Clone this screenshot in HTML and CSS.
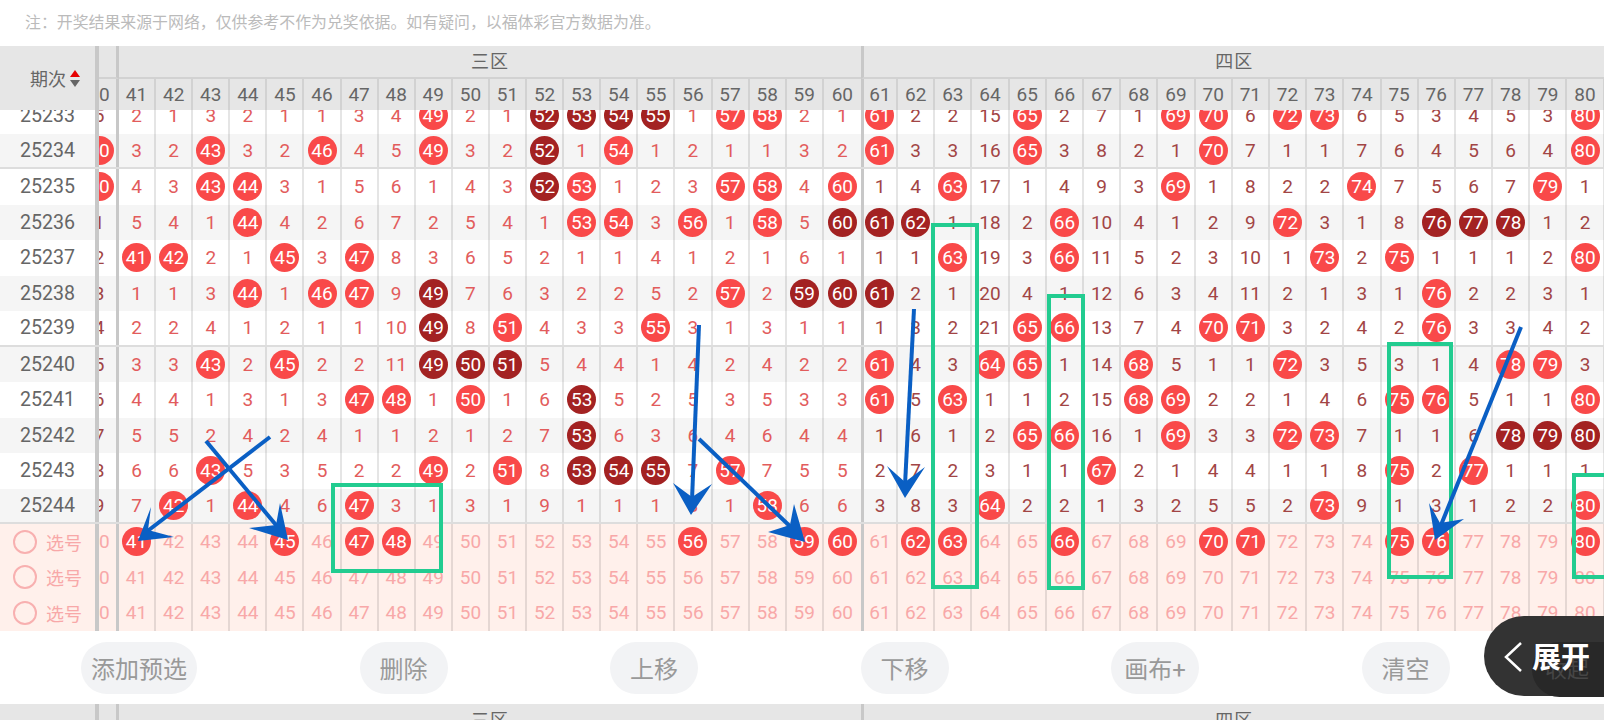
FILE: index.html
```html
<!DOCTYPE html>
<html lang="zh">

<head>
    <meta charset="utf-8">
    <meta name="viewport" content="width=device-width, initial-scale=1.0">
    <title>开奖走势</title>
    <link rel="stylesheet" href="styles.css">
</head>

<body>
    <p class="note">注：开奖结果来源于网络，仅供参考不作为兑奖依据。如有疑问，以福体彩官方数据为准。</p>

    <section class="board">
        <div class="head" id="head">
            <div class="head-period">
                <span>期次</span>
                <span class="sort"><i class="up"></i><i class="down"></i></span>
            </div>
            <div class="head-clip"></div>
            <div class="zone">三区</div>
            <div class="zone zone-four">四区</div>
        </div>
        <div id="rows"></div>
    </section>

    <div class="toolbar">
        <button class="tool">添加预选</button>
        <button class="tool">删除</button>
        <button class="tool">上移</button>
        <button class="tool">下移</button>
        <button class="tool">画布+</button>
        <button class="tool">清空</button>
    </div>

    <div class="head peek">
        <div class="head-period"></div>
        <div class="head-clip"></div>
        <div class="zone">三区</div>
        <div class="zone zone-four">四区</div>
    </div>

    <div class="fold">
        <div class="fold-under">收起</div>
        <svg class="chevron" width="19" height="32" viewBox="0 0 19 32">
            <polyline points="17,2 2,16 17,30" />
        </svg>
        <span class="fold-text">展开</span>
    </div>

    <svg class="marks" width="1604" height="720" viewBox="0 0 1604 720">
        <g class="boxes">
            <rect x="333" y="485" width="108" height="86" />
            <rect x="933" y="225" width="44" height="362" />
            <rect x="1049" y="296" width="34" height="292" />
            <rect x="1389" y="344" width="62" height="233" />
            <rect x="1574" y="475" width="40" height="102" />
        </g>
        <g class="arrows">
            <line x1="270" y1="437" x2="145" y2="533" />
            <polygon points="138,541 151,507 148,530 174,537" />
            <line x1="206" y1="441" x2="281" y2="531" />
            <polygon points="288,540 280,503 276,525 249,528" />
            <line x1="699" y1="325" x2="692" y2="500" />
            <polygon points="691,515 673,483 692,497 712,484" />
            <line x1="914" y1="309" x2="905" y2="485" />
            <polygon points="905,498 887,466 905,482 925,467" />
            <line x1="699" y1="439" x2="797" y2="533" />
            <polygon points="805,542 794,504 790,525 768,532" />
            <line x1="1521" y1="327" x2="1441" y2="525" />
            <polygon points="1435,540 1429,503 1440,523 1464,519" />
        </g>
    </svg>

    <script src="script.js"></script>
</body>

</html>
```

FILE: styles.css
```css
* {
    box-sizing: border-box;
}

body {
    margin: 0;
    width: 1604px;
    height: 720px;
    overflow: hidden;
    position: relative;
    background-color: white;
    font-family: Roboto, "Noto Sans CJK SC", sans-serif;
}

.note {
    margin: 0;
    height: 46px;
    padding-left: 25px;
    line-height: 46px;
    font-size: 15.9px;
    color: #bbbbbb;
}

/* header, same columns as the rows */
.head {
    display: grid;
    grid-template-columns: 99px 20px repeat(20, 37.1px) repeat(20, 37.2px);
    grid-template-rows: 33px 31px;
    height: 64px;
    position: relative;
    z-index: 2;
    background-color: #e6e6e6;
    color: #666666;
}

.head-period {
    grid-row: 1 / 3;
    display: flex;
    align-items: center;
    padding-left: 30px;
    gap: 4px;
    font-size: 18px;
    border-right: 4px solid #c8c8c8;
}

.sort {
    display: flex;
    flex-direction: column;
    gap: 3px;
}

.sort i {
    display: block;
    width: 0;
    height: 0;
    border-left: 5px solid transparent;
    border-right: 5px solid transparent;
}

.sort .up {
    border-bottom: 7px solid #e60000;
}

.sort .down {
    border-top: 7px solid #666666;
}

.head-clip {
    border-right: 3px solid #c8c8c8;
    border-bottom: 2px solid #d2d2d2;
}

.zone {
    grid-column: span 20;
    display: flex;
    align-items: center;
    justify-content: center;
    padding-bottom: 3px;
    font-size: 18px;
    letter-spacing: 1px;
    border-bottom: 2px solid #d2d2d2;
}

.zone-four {
    border-left: 3px solid #c8c8c8;
}

.num {
    display: flex;
    align-items: center;
    justify-content: center;
    font-size: 19px;
    border-right: 2px solid #d2d2d2;
}

.num.first-four,
.cell.first-four {
    border-left: 3px solid #c8c8c8;
}

.num.last-three,
.cell.last-three {
    border-right: 0;
}

/* column 40 is scrolled half under the period column */
.clip,
.num.clipped {
    display: flex;
    align-items: center;
    justify-content: flex-end;
    overflow: hidden;
    border-right: 3px solid #c8c8c8;
    font-size: 19px;
}

.clip {
    color: #a04444;
}

.slot {
    flex-shrink: 0;
    width: 34px;
    display: flex;
    justify-content: center;
}

/* rows */
#rows {
    margin-top: -12px;
}

.row {
    display: grid;
    grid-template-columns: 99px 20px repeat(20, 37.1px) repeat(20, 37.2px);
    height: 35.5px;
    position: relative;
}

.row:nth-child(even) {
    background-color: #f5f5f5;
}

.row.group-end {
    border-bottom: 2px solid #dddddd;
}

.row.pick {
    background-color: #fff0eb;
}

.period {
    display: flex;
    align-items: center;
    justify-content: center;
    font-size: 19.6px;
    color: #666666;
    border-right: 4px solid #c8c8c8;
}

.pick .period {
    justify-content: flex-start;
    padding-left: 13px;
    gap: 9px;
    font-size: 18px;
    color: #f8a8a8;
}

.ring {
    width: 24px;
    height: 24px;
    border: 2px solid #f8b0b0;
    border-radius: 50%;
}

.cell {
    display: flex;
    align-items: center;
    justify-content: center;
    font-size: 19px;
    border-right: 2px solid rgba(0, 0, 0, 0.1);
    color: #e25c5c;
}

.cell.four {
    color: #a24545;
}

.pick .cell,
.pick .clip {
    color: #f8a8a8;
}

.ball {
    flex-shrink: 0;
    width: 29px;
    height: 29px;
    border-radius: 50%;
    display: flex;
    align-items: center;
    justify-content: center;
    font-size: 19px;
    color: white;
    background-color: #f94949;
}

.pick .cell .ball {
    color: white;
}

.ball.dark {
    background-color: #a32222;
}

/* buttons */
.toolbar {
    display: flex;
    align-items: flex-start;
    gap: 162.5px;
    height: 73px;
    padding: 11px 0 0 81px;
}

.tool {
    height: 52px;
    min-width: 88px;
    padding: 0 10px;
    border: 0;
    border-radius: 26px;
    background-color: #f2f3f5;
    color: #999999;
    font-family: inherit;
    font-size: 24px;
}

.peek {
    height: 16px;
    grid-template-rows: 33px;
    overflow: hidden;
}

.peek .zone {
    padding-bottom: 0;
}

.peek .head-period,
.peek .head-clip {
    grid-row: 1;
}

/* floating handle */
.fold {
    position: absolute;
    left: 1484px;
    top: 616px;
    width: 120px;
    height: 80px;
    border-radius: 40px 0 0 40px;
    background-color: #333333;
    z-index: 4;
}

.fold-under {
    position: absolute;
    left: 48px;
    top: 26px;
    width: 72px;
    height: 55px;
    padding-left: 13px;
    border-radius: 28px 0 0 28px;
    background-color: #282828;
    color: #464646;
    font-size: 22px;
    line-height: 55px;
}

.chevron {
    position: absolute;
    left: 20px;
    top: 25px;
}

.chevron polyline {
    fill: none;
    stroke: white;
    stroke-width: 2.5;
}

.fold-text {
    position: absolute;
    left: 48px;
    top: 21px;
    font-size: 29px;
    line-height: 42px;
    font-weight: bold;
    color: white;
    white-space: nowrap;
}

/* hand drawn marks on top of the chart */
.marks {
    position: absolute;
    left: 0;
    top: 0;
    z-index: 3;
    pointer-events: none;
}

.boxes rect {
    fill: none;
    stroke: #22cc90;
    stroke-width: 4;
}

.arrows line {
    stroke: #0a5fc4;
    stroke-width: 4;
}

.arrows polygon {
    fill: #0a5fc4;
}
```

FILE: script.js
```js
// * is a light ball, ^ is a dark ball. First value is the half hidden column 40
const draws = [
    ["25233", "5 2 1 3 2 1 1 3 4 *49 2 1 ^52 ^53 ^54 ^55 1 *57 *58 2 1 *61 2 2 15 *65 2 7 1 *69 *70 6 *72 *73 6 5 3 4 5 3 *80"],
    ["25234", "*40 3 2 *43 3 2 *46 4 5 *49 3 2 ^52 1 *54 1 2 1 1 3 2 *61 3 3 16 *65 3 8 2 1 *70 7 1 1 7 6 4 5 6 4 *80"],
    ["25235", "*40 4 3 *43 *44 3 1 5 6 1 4 3 ^52 *53 1 2 3 *57 *58 4 *60 1 4 *63 17 1 4 9 3 *69 1 8 2 2 *74 7 5 6 7 *79 1"],
    ["25236", "1 5 4 1 *44 4 2 6 7 2 5 4 1 *53 *54 3 *56 1 *58 5 ^60 ^61 ^62 1 18 2 *66 10 4 1 2 9 *72 3 1 8 ^76 ^77 ^78 1 2"],
    ["25237", "2 *41 *42 2 1 *45 3 *47 8 3 6 5 2 1 1 4 1 2 1 6 1 1 1 *63 19 3 *66 11 5 2 3 10 1 *73 2 *75 1 1 1 2 *80"],
    ["25238", "3 1 1 3 *44 1 *46 *47 9 ^49 7 6 3 2 2 5 2 *57 2 ^59 ^60 ^61 2 1 20 4 1 12 6 3 4 11 2 1 3 1 *76 2 2 3 1"],
    ["25239", "4 2 2 4 1 2 1 1 10 ^49 8 *51 4 3 3 *55 3 1 3 1 1 1 3 2 21 *65 *66 13 7 4 *70 *71 3 2 4 2 *76 3 3 4 2"],
    ["25240", "5 3 3 *43 2 *45 2 2 11 ^49 ^50 ^51 5 4 4 1 4 2 4 2 2 *61 4 3 *64 *65 1 14 *68 5 1 1 *72 3 5 3 1 4 *78 *79 3"],
    ["25241", "6 4 4 1 3 1 3 *47 *48 1 *50 1 6 ^53 5 2 5 3 5 3 3 *61 5 *63 1 1 2 15 *68 *69 2 2 1 4 6 *75 *76 5 1 1 *80"],
    ["25242", "7 5 5 2 4 2 4 1 1 2 1 2 7 ^53 6 3 6 4 6 4 4 1 6 1 2 *65 *66 16 1 *69 3 3 *72 *73 7 1 1 6 ^78 ^79 ^80"],
    ["25243", "8 6 6 *43 5 3 5 2 2 *49 2 *51 8 ^53 ^54 ^55 7 *57 7 5 5 2 7 2 3 1 1 *67 2 1 4 4 1 1 8 *75 2 *77 1 1 1"],
    ["25244", "9 7 *42 1 *44 4 6 *47 3 1 3 1 9 1 1 1 8 1 *58 6 6 3 8 3 *64 2 2 1 3 2 5 5 2 *73 9 1 3 1 2 2 *80"]
];

const picked = [[41, 45, 47, 48, 56, 59, 60, 62, 63, 66, 70, 71, 75, 76, 80], [], []];

const head = document.querySelector("#head");
const rows = document.querySelector("#rows");

function makeValue(value) {
    if (value[0] == "*" || value[0] == "^") {
        const dark = value[0] == "^" ? " dark" : "";
        return `<span class="ball${dark}">${value.slice(1)}</span>`;
    }
    return value;
}

function zoneEdge(nr) {
    if (nr == 61) return " first-four";
    if (nr == 60) return " last-three";
    return "";
}

function showHead() {
    head.insertAdjacentHTML("beforeend", `<div class="num clipped"><span class="slot">40</span></div>`);
    for (let nr = 41; nr <= 80; nr++) {
        head.insertAdjacentHTML("beforeend", `<div class="num${zoneEdge(nr)}">${nr}</div>`);
    }
}

function showRow(first, values, extra) {
    let html = `<div class="period">${first}</div>`;
    html += `<div class="clip"><span class="slot">${makeValue(values[0])}</span></div>`;
    for (let i = 1; i <= 40; i++) {
        const nr = 40 + i;
        const four = nr > 60 ? " four" : "";
        html += `<div class="cell${four}${zoneEdge(nr)}">${makeValue(values[i])}</div>`;
    }
    rows.insertAdjacentHTML("beforeend", `<div class="row ${extra}">${html}</div>`);
}

function showDraws() {
    draws.forEach((draw, i) => {
        const extra = (i - 1) % 5 == 0 ? "group-end" : "";
        showRow(draw[0], draw[1].split(" "), extra);
    });
}

function showPicks() {
    picked.forEach(balls => {
        const values = [];
        for (let nr = 40; nr <= 80; nr++) {
            values.push(balls.includes(nr) ? "*" + nr : String(nr));
        }
        showRow(`<span class="ring"></span>选号`, values, "pick");
    });
}

showHead();
showDraws();
showPicks();
```
